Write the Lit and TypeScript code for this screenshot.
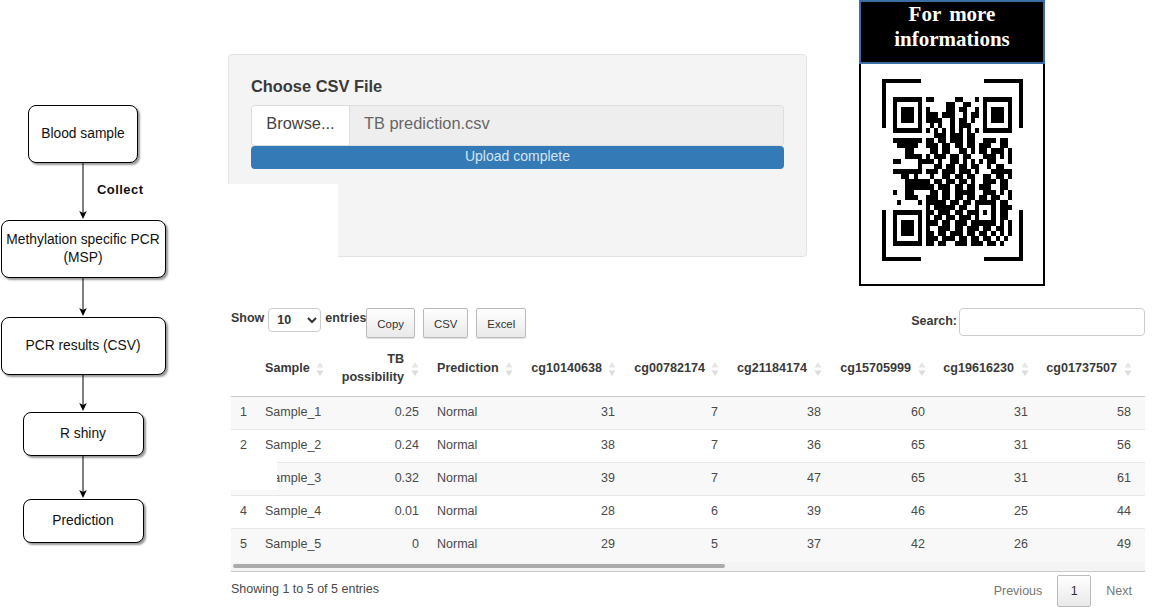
import { LitElement, html, svg, css } from 'lit'
import { customElement } from 'lit/decorators.js'

// stretched qr code, 29 x 29 modules. groups are cols 0-7, 8-20, 21-28
const qrRows = [
  '#######. ##.....##...# .#######',
  '#.....#. .....##..##.. .#.....#',
  '#.###.#. #....##.##..# .#.###.#',
  '#.###.#. ###.###..#.## .#.###.#',
  '#.###.#. ####..#.##.#. .#.###.#',
  '#.....#. .#.#..#.###.. .#.....#',
  '#######. #.#.#.#.#.#.# .#######',
  '........ ..###.###.##. ........',
  '#######. ##.##.###.##. .###.##.',
  '.#####.. ###.##.##.##. ###..##.',
  '...##... .##.##..##.#. ##.###.#',
  '...####. #.###.##.##.. .###.#.#',
  '##....## ##.#..##.#.#. #.##...#',
  '......#. ..##.##.##.## ..#.##..',
  '#######. ###.###.###.# ...#####',
  '..##.#.. .#..##.##.##. .##.##.#',
  '...##### #.##.##.##.#. .###.##.',
  '...##### ##.###.##.##. ###..##.',
  '#..##... .##.##.#####. .###.#.#',
  '...###.. ###.##.##.##. ##.##..#',
  '.#....#. #####.##.##.# ####.##.',
  '........ #.#####.##..# ...#.###',
  '#######. ##.###.##.### .#.#.##.',
  '#.....#. #.##.##.###.# ...#.##.',
  '#.###.#. ###.##.###.## ####.#.#',
  '#.###.#. #..###.##.### .##.##.#',
  '#.###.#. ##.##.###.##. ##.#.#.#',
  '#.....#. ###.###.##.## .##.#.#.',
  '#######. ##.##..###.## #.##.#..',
].map((row) => row.replace(/ /g, ''))

const rows = [
  ['1', 'Sample_1', '0.25', 'Normal', 31, 7, 38, 60, 31, 58],
  ['2', 'Sample_2', '0.24', 'Normal', 38, 7, 36, 65, 31, 56],
  ['3', 'Sample_3', '0.32', 'Normal', 39, 7, 47, 65, 31, 61],
  ['4', 'Sample_4', '0.01', 'Normal', 28, 6, 39, 46, 25, 44],
  ['5', 'Sample_5', '0', 'Normal', 29, 5, 37, 42, 26, 49],
]

const cgColumns = ['cg10140638', 'cg00782174', 'cg21184174', 'cg15705999', 'cg19616230', 'cg01737507']

@customElement('app-root')
export class AppRoot extends LitElement {
  static styles = css`
    :host {
      display: grid;
      grid-template-columns: 228px 930px;
      width: 1158px;
      height: 614px;
      overflow: hidden;
      background: #fff;
      font-family: "Liberation Sans", Arial, sans-serif;
      color: #333;
    }

    /* flow chart */
    .flow {
      display: flex;
      flex-direction: column;
      align-items: center;
      width: 166px;
      padding-top: 105px;
      color: #111;
      font-size: 13.8px;
    }
    .node {
      box-sizing: border-box;
      display: flex;
      align-items: center;
      justify-content: center;
      padding-bottom: 1px;
      text-align: center;
      line-height: 18px;
      background: #fff;
      border: 1px solid #000;
      border-radius: 8px;
      box-shadow: 2px 2px 2px #999;
    }
    .node.small { width: 110px; height: 58px; }
    .node.wide { width: 165px; height: 58px; }
    .node.mid { width: 121px; height: 44px; }
    .conn {
      position: relative;
      display: flex;
      justify-content: center;
    }
    .conn svg { display: block; }
    .conn-label {
      position: absolute;
      left: 20px;
      top: 19px;
      font-weight: 700;
      font-size: 13px;
      letter-spacing: 0.45px;
      line-height: 16px;
    }

    /* upload panel + qr */
    .top {
      display: flex;
      align-items: flex-start;
      height: 286px;
    }
    .well {
      position: relative;
      box-sizing: border-box;
      width: 579px;
      height: 203px;
      margin-top: 54px;
      padding: 20px 22px 0;
      background: #f4f4f4;
      border: 1px solid #e3e3e3;
      border-radius: 4px;
    }
    .well-label {
      font-size: 16.4px;
      font-weight: 700;
      line-height: 22px;
      margin-bottom: 8px;
      color: #3a3a3a;
    }
    .file-row {
      display: flex;
      box-sizing: border-box;
      height: 41px;
      border: 1px solid #ddd;
      border-radius: 4px;
      font-size: 16.4px;
      color: #555;
    }
    .browse {
      display: flex;
      align-items: center;
      justify-content: center;
      width: 97px;
      padding-bottom: 4px;
      background: #fff;
      border-right: 1px solid #ddd;
      border-radius: 4px 0 0 4px;
      color: #444;
    }
    .file-name {
      flex: 1;
      display: flex;
      align-items: center;
      padding: 0 0 4px 14px;
      background: #eee;
      border-radius: 0 4px 4px 0;
      color: #666;
    }
    .progress {
      height: 23px;
      background: #337ab7;
      border-radius: 4px;
      color: #d6e4f0;
      font-size: 14px;
      line-height: 20px;
      text-align: center;
    }
    .patch {
      position: absolute;
      background: #fff;
    }
    .well .patch {
      left: -1px;
      bottom: -1px;
      width: 110px;
      height: 73px;
    }

    .qr-card {
      box-sizing: border-box;
      width: 186px;
      height: 286px;
      margin-left: 52px;
      border: 2px solid #000;
      border-top: 0;
      background: #fff;
    }
    .qr-head {
      box-sizing: border-box;
      height: 64px;
      margin: 0 -2px;
      background: #000;
      border: 2px solid #3b6ea5;
      color: #fff;
      font-family: "Liberation Serif", "Times New Roman", serif;
      font-weight: 700;
      font-size: 21px;
      line-height: 25px;
      word-spacing: 3px;
      text-align: center;
    }
    .qr-body { padding: 15px 0 0 21px; }
    .qr-body svg { display: block; }

    /* data table */
    .table-area {
      width: 914px;
      margin: 22px 0 0 3px;
      font-size: 12.5px;
    }
    .controls {
      display: flex;
      align-items: flex-start;
      height: 42px;
      color: #3a3a3a;
    }
    .controls b { line-height: 21px; }
    .controls select {
      box-sizing: border-box;
      width: 53px;
      height: 24px;
      margin: 0 4px;
      padding-left: 4px;
      background: #fff;
      border: 1px solid #ccc;
      border-radius: 4px;
      font: 700 12.5px "Liberation Sans", Arial, sans-serif;
      color: #333;
    }
    .dt-btn {
      box-sizing: border-box;
      height: 30px;
      margin-right: 8px;
      padding: 0 10px;
      line-height: 30px;
      font-size: 11.4px;
      color: #333;
      background: linear-gradient(#fff, #e9e9e9);
      border: 1px solid #bbb;
      border-radius: 2px;
      box-shadow: 0 1px 1px #ddd;
    }
    .search {
      display: flex;
      align-items: flex-start;
      margin-left: auto;
      gap: 2px;
    }
    .search b { line-height: 27px; }
    .search-box {
      box-sizing: border-box;
      width: 186px;
      height: 28px;
      background: #fff;
      border: 1px solid #ccc;
      border-radius: 4px;
    }
    .table-wrap { position: relative; }
    table {
      width: 914px;
      table-layout: fixed;
      border-collapse: collapse;
    }
    thead tr { height: 46px; border-bottom: 1.5px solid #c9c9c9; }
    th {
      position: relative;
      padding: 0 24px 10px 0;
      font-size: 12.6px;
      font-weight: 700;
      line-height: 18px;
      text-align: right;
      color: #3a3a3a;
    }
    th.left { text-align: left; padding-left: 10px; }
    th.left.pred { padding-left: 9px; }
    th.near { padding-right: 23px; }
    th .sort {
      position: absolute;
      right: 9px;
      top: 12px;
    }
    th:last-child { padding-right: 28px; }
    th:last-child .sort { right: 13px; }
    tbody tr { height: 33px; border-top: 1px solid #e6e6e6; }
    tbody tr:first-child { border-top: 0; }
    tbody tr:nth-child(odd) { background: #f8f8f8; }
    td {
      padding: 0 10px 2px 0;
      text-align: right;
      color: #4a4a4a;
    }
    td.idx { padding-left: 9px; text-align: left; }
    td.left { padding-left: 10px; text-align: left; }
    td.left.pred { padding-left: 9px; }
    td.tb { padding-right: 9px; }
    td:last-child { padding-right: 14px; }
    .table-wrap .patch {
      left: 0;
      top: 112px;
      width: 46px;
      height: 28px;
    }
    .scrollbar {
      box-sizing: border-box;
      height: 10px;
      padding: 2px 0 0 2px;
      background: #f4f4f4;
      border-bottom: 1px solid #c9c9c9;
    }
    .thumb {
      width: 492px;
      height: 4px;
      background: #aaa;
      border-radius: 2px;
    }
    .foot {
      display: flex;
      align-items: flex-start;
      padding-top: 3px;
    }
    .foot .info { line-height: 28px; color: #4a4a4a; }
    .pager {
      display: flex;
      align-items: center;
      margin-left: auto;
      margin-right: 13px;
      color: #777;
    }
    .page-btn {
      box-sizing: border-box;
      width: 34px;
      height: 32px;
      margin: 0 15px;
      line-height: 30px;
      text-align: center;
      color: #333;
      background: linear-gradient(#fff, #e9e9e9);
      border: 1px solid #bbb;
      border-radius: 2px;
    }
  `

  private arrow(h: number) {
    return svg`<svg width="12" height=${h} viewBox="0 0 12 ${h}">
      <path d="M6 0V${h - 6}" stroke="#000" stroke-width="1" fill="none"/>
      <path d="M2.2 ${h - 9}L6 ${h - 7}L9.8 ${h - 9}L6 ${h - 1}Z" fill="#000"/>
    </svg>`
  }

  private sortIcon() {
    return html`<svg class="sort" width="8" height="14" viewBox="0 0 8 14">
      <path d="M4 0L7.5 5.5H.5Z" fill="#e6e6e6"/>
      <path d="M4 14L.5 8.5H7.5Z" fill="#dcdcdc"/>
    </svg>`
  }

  private qr() {
    const cells: unknown[] = []
    qrRows.forEach((row, y) => {
      for (let x = 0; x < 29; x++) {
        if (row[x] !== '#') continue
        let end = x
        while (end + 1 < 29 && row[end + 1] === '#') end++
        cells.push(svg`<rect x=${x * 41 + 110} y=${y * 51.4 + 180} width=${(end - x + 1) * 41} height="51.4"/>`)
        x = end
      }
    })
    return html`<svg width="141" height="182" viewBox="0 0 1410 1820" shape-rendering="crispEdges">
      <path d="M0 0H390V40H40V490H0Z M1020 0H1410V490H1370V40H1020Z M0 1310H40V1780H390V1820H0Z M1410 1310V1820H1020V1780H1370V1310Z"/>
      ${cells}
    </svg>`
  }

  render() {
    return html`
      <div class="flow">
        <div class="node small">Blood sample</div>
        <div class="conn">${this.arrow(57)}<span class="conn-label">Collect</span></div>
        <div class="node wide">Methylation specific PCR<br />(MSP)</div>
        <div class="conn">${this.arrow(39)}</div>
        <div class="node wide">PCR results (CSV)</div>
        <div class="conn">${this.arrow(37)}</div>
        <div class="node mid">R shiny</div>
        <div class="conn">${this.arrow(43)}</div>
        <div class="node mid">Prediction</div>
      </div>

      <div class="main">
        <div class="top">
          <div class="well">
            <div class="well-label">Choose CSV File</div>
            <div class="file-row">
              <div class="browse">Browse...</div>
              <div class="file-name">TB prediction.csv</div>
            </div>
            <div class="progress">Upload complete</div>
            <div class="patch"></div>
          </div>
          <div class="qr-card">
            <div class="qr-head">For more<br />informations</div>
            <div class="qr-body">${this.qr()}</div>
          </div>
        </div>

        <div class="table-area">
          <div class="controls">
            <b>Show</b>
            <select><option>10</option></select>
            <b>entries</b>
            <div class="dt-btn">Copy</div>
            <div class="dt-btn">CSV</div>
            <div class="dt-btn">Excel</div>
            <div class="search">
              <b>Search:</b>
              <div class="search-box"></div>
            </div>
          </div>

          <div class="table-wrap">
            <table>
              <colgroup>
                <col style="width:24px" /><col style="width:78px" /><col style="width:95px" /><col style="width:94px" />
                <col style="width:103px" /><col style="width:103px" /><col style="width:103px" /><col style="width:104px" /><col style="width:103px" /><col style="width:107px" />
              </colgroup>
              <thead>
                <tr>
                  <th></th>
                  <th class="left">Sample${this.sortIcon()}</th>
                  <th>TB<br />possibility${this.sortIcon()}</th>
                  <th class="left pred">Prediction${this.sortIcon()}</th>
                  ${cgColumns.map((name, i) => html`<th class=${i < 2 ? 'near' : ''}>${name}${this.sortIcon()}</th>`)}
                </tr>
              </thead>
              <tbody>
                ${rows.map(
                  (r) => html`<tr>
                    <td class="idx">${r[0]}</td>
                    <td class="left">${r[1]}</td>
                    <td class="tb">${r[2]}</td>
                    <td class="left pred">${r[3]}</td>
                    ${r.slice(4).map((v) => html`<td>${v}</td>`)}
                  </tr>`
                )}
              </tbody>
            </table>
            <div class="patch"></div>
            <div class="scrollbar"><div class="thumb"></div></div>
          </div>

          <div class="foot">
            <div class="info">Showing 1 to 5 of 5 entries</div>
            <div class="pager">
              <span>Previous</span>
              <div class="page-btn">1</div>
              <span>Next</span>
            </div>
          </div>
        </div>
      </div>
    `
  }
}
